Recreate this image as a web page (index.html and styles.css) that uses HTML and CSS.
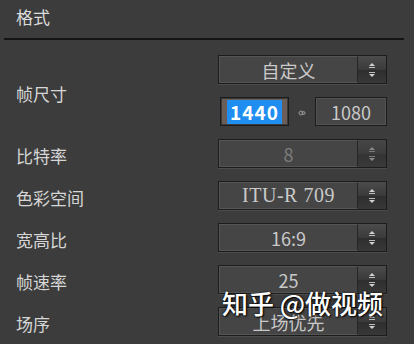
FILE: index.html
```html
<!DOCTYPE html>
<html lang="zh">
<head>
<meta charset="utf-8">
<link rel="stylesheet" href="styles.css">
</head>
<body>
<div class="page">
  <div class="header">格式</div>
  <div class="divider"></div>
  <div class="form">
    <div class="label span2">帧尺寸</div>
    <div class="select">
      <div class="main">自定义</div>
      <div class="spin">
        <svg width="10" height="8" viewBox="0 0 10 8"><path d="M2 5 L5 2 L8 5 Z" fill="#d0d0d0"/><rect x="2" y="6" width="6" height="1" fill="#bdbdbd"/></svg>
        <svg width="10" height="8" viewBox="0 0 10 8"><rect x="2" y="1" width="6" height="1" fill="#bdbdbd"/><path d="M2 3 L8 3 L5 6 Z" fill="#d0d0d0"/></svg>
      </div>
    </div>
    <div class="size">
      <div class="field active"><span class="sel">1440</span></div>
      <svg class="link" width="8" height="8" viewBox="0 0 8 8"><circle cx="3" cy="4" r="2" fill="none" stroke="#9a9a9a" stroke-width="1"/><circle cx="5.5" cy="4" r="1.5" fill="none" stroke="#9a9a9a" stroke-width="1"/></svg>
      <div class="field">1080</div>
    </div>

    <div class="label">比特率</div>
    <div class="select disabled">
      <div class="main">8</div>
      <div class="spin">
        <svg width="10" height="8" viewBox="0 0 10 8"><path d="M2 5 L5 2 L8 5 Z" fill="#8a8a8a"/><rect x="2" y="6" width="6" height="1" fill="#7a7a7a"/></svg>
        <svg width="10" height="8" viewBox="0 0 10 8"><rect x="2" y="1" width="6" height="1" fill="#7a7a7a"/><path d="M2 3 L8 3 L5 6 Z" fill="#8a8a8a"/></svg>
      </div>
    </div>

    <div class="label">色彩空间</div>
    <div class="select">
      <div class="main latin">ITU-R 709</div>
      <div class="spin">
        <svg width="10" height="8" viewBox="0 0 10 8"><path d="M2 5 L5 2 L8 5 Z" fill="#d0d0d0"/><rect x="2" y="6" width="6" height="1" fill="#bdbdbd"/></svg>
        <svg width="10" height="8" viewBox="0 0 10 8"><rect x="2" y="1" width="6" height="1" fill="#bdbdbd"/><path d="M2 3 L8 3 L5 6 Z" fill="#d0d0d0"/></svg>
      </div>
    </div>

    <div class="label">宽高比</div>
    <div class="select">
      <div class="main">16:9</div>
      <div class="spin">
        <svg width="10" height="8" viewBox="0 0 10 8"><path d="M2 5 L5 2 L8 5 Z" fill="#d0d0d0"/><rect x="2" y="6" width="6" height="1" fill="#bdbdbd"/></svg>
        <svg width="10" height="8" viewBox="0 0 10 8"><rect x="2" y="1" width="6" height="1" fill="#bdbdbd"/><path d="M2 3 L8 3 L5 6 Z" fill="#d0d0d0"/></svg>
      </div>
    </div>

    <div class="label">帧速率</div>
    <div class="select">
      <div class="main">25</div>
      <div class="spin">
        <svg width="10" height="8" viewBox="0 0 10 8"><path d="M2 5 L5 2 L8 5 Z" fill="#d0d0d0"/><rect x="2" y="6" width="6" height="1" fill="#bdbdbd"/></svg>
        <svg width="10" height="8" viewBox="0 0 10 8"><rect x="2" y="1" width="6" height="1" fill="#bdbdbd"/><path d="M2 3 L8 3 L5 6 Z" fill="#d0d0d0"/></svg>
      </div>
    </div>

    <div class="label">场序</div>
    <div class="select">
      <div class="main">上场优先</div>
      <div class="spin">
        <svg width="10" height="8" viewBox="0 0 10 8"><path d="M2 5 L5 2 L8 5 Z" fill="#d0d0d0"/><rect x="2" y="6" width="6" height="1" fill="#bdbdbd"/></svg>
        <svg width="10" height="8" viewBox="0 0 10 8"><rect x="2" y="1" width="6" height="1" fill="#bdbdbd"/><path d="M2 3 L8 3 L5 6 Z" fill="#d0d0d0"/></svg>
      </div>
    </div>
  </div>
  <div class="watermark">知乎 @做视频</div>
</div>
</body>
</html>
```

FILE: styles.css
```css
html, body {
  margin: 0;
  padding: 0;
  background: #3c3c3c;
  width: 414px;
  height: 344px;
  overflow: hidden;
}

.page {
  position: relative;
  width: 414px;
  height: 344px;
  font-family: "Noto Sans CJK SC", "Noto Sans", sans-serif;
  color: #d4d4d4;
}

.header {
  height: 38px;
  box-sizing: border-box;
  padding: 6px 0 0 16px;
  font-size: 17px;
  line-height: 22px;
  color: #dcdcdc;
}

.divider {
  height: 2px;
  margin: 0 10px 0 4px;
  background: #141414;
}

.form {
  display: grid;
  grid-template-columns: 202px 169px;
  grid-auto-rows: 29px;
  row-gap: 13px;
  padding: 15px 0 0 16px;
}

.label {
  display: flex;
  align-items: center;
  padding-top: 3px;
  font-size: 17px;
  color: #d6d6d6;
}

.label.span2 {
  grid-row: span 2;
  padding-top: 5px;
}

.select {
  display: flex;
  box-sizing: border-box;
  border: 1px solid #1c1c1c;
  background: #454545;
  box-shadow: 0 1px 0 #4c4c4c;
}

.select .main {
  flex: 1;
  display: flex;
  align-items: center;
  justify-content: center;
  border: 1px solid #555;
  border-right: 1px solid #262626;
  font-size: 18px;
  color: #c9c9c9;
}

.select .main.latin {
  font-family: "Liberation Serif", "Noto Sans CJK SC", serif;
  font-size: 20px;
  letter-spacing: 0.5px;
}

.select .spin {
  width: 28px;
  display: flex;
  flex-direction: column;
  align-items: center;
  justify-content: center;
  gap: 2px;
  background: linear-gradient(#4c4c4c, #3a3a3a 50%, #2e2e2e 52%, #383838);
}

.select.disabled .main {
  color: #7c7c7c;
  background: #454545;
}

.select.disabled .spin {
  background: linear-gradient(#464646, #3c3c3c 50%, #333 52%, #3a3a3a);
}

.size {
  display: flex;
  align-items: center;
  justify-content: space-between;
  padding-left: 2px;
}

.field {
  box-sizing: border-box;
  height: 29px;
  width: 72px;
  display: flex;
  align-items: center;
  justify-content: center;
  border: 1px solid #1c1c1c;
  background: #464646;
  box-shadow: inset 0 0 0 1px #535353;
  font-size: 18px;
  color: #c9c9c9;
}

.field.active {
  width: 69px;
  background: #6b5d58;
  box-shadow: inset 0 0 0 1px #3a3a3a;
}

.field .sel {
  background: #1f8ef0;
  color: #ffffff;
  font-weight: bold;
  font-size: 19px;
  height: 24px;
  width: 55px;
  line-height: 24px;
  text-align: center;
  letter-spacing: 1px;
}

.link {
  margin-top: 3px;
}

.watermark {
  position: absolute;
  left: 222px;
  top: 287px;
  font-size: 26px;
  line-height: 32px;
  color: #ffffff;
  font-weight: 500;
  text-shadow: 0 0 2px #000, 1px 1px 2px #000;
  white-space: nowrap;
}
```
